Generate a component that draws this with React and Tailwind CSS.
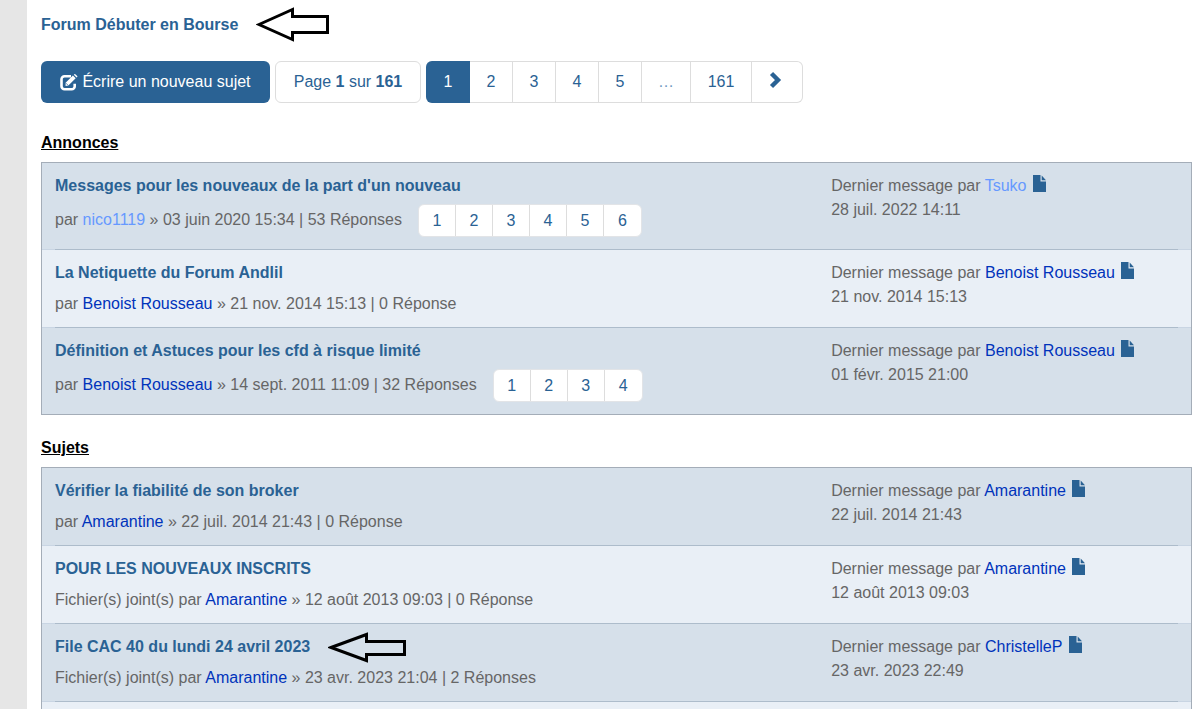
import React from "react";

const announcements = [
  {
    title: "Messages pour les nouveaux de la part d'un nouveau",
    author: "nico1119", light: true, date: "03 juin 2020 15:34", replies: "53 Réponses",
    pages: ["1", "2", "3", "4", "5", "6"],
    last: "Tsuko", lastLight: true, lastDate: "28 juil. 2022 14:11",
  },
  {
    title: "La Netiquette du Forum Andlil",
    author: "Benoist Rousseau", date: "21 nov. 2014 15:13", replies: "0 Réponse",
    last: "Benoist Rousseau", lastDate: "21 nov. 2014 15:13",
  },
  {
    title: "Définition et Astuces pour les cfd à risque limité",
    author: "Benoist Rousseau", date: "14 sept. 2011 11:09", replies: "32 Réponses",
    pages: ["1", "2", "3", "4"],
    last: "Benoist Rousseau", lastDate: "01 févr. 2015 21:00",
  },
];

const topics = [
  {
    title: "Vérifier la fiabilité de son broker",
    author: "Amarantine", date: "22 juil. 2014 21:43", replies: "0 Réponse",
    last: "Amarantine", lastDate: "22 juil. 2014 21:43",
  },
  {
    title: "POUR LES NOUVEAUX INSCRITS", attached: true,
    author: "Amarantine", date: "12 août 2013 09:03", replies: "0 Réponse",
    last: "Amarantine", lastDate: "12 août 2013 09:03",
  },
  {
    title: "File CAC 40 du lundi 24 avril 2023", attached: true, arrow: true,
    author: "Amarantine", date: "23 avr. 2023 21:04", replies: "2 Réponses",
    last: "ChristelleP", lastDate: "23 avr. 2023 22:49",
  },
];

function FileIcon() {
  return (
    <svg width="13" height="17" viewBox="0 0 13 17" className="ml-0.5 inline-block align-[-1px]" aria-hidden="true">
      <path d="M0 0h7.5v6.5H13V17H0zM8.7 0.5 13 5.3H8.7z" fill="#2a6294" />
    </svg>
  );
}

function EditIcon() {
  return (
    <svg width="18" height="17" viewBox="0 0 18 17" fill="none" aria-hidden="true">
      <path d="M11 2.2H4.5a3 3 0 0 0-3 3v7.1a3 3 0 0 0 3 3h7.2a3 3 0 0 0 3-3V9.8" stroke="white" strokeWidth="2.6" />
      <path d="M5.6 11.9V8.7l7.3-7.2 2.8 2.8-7.3 7.3zM13.8.7l.6-.5q.4-.4.9 0l1.9 1.9q.4.5 0 .9l-.6.5z" fill="white" />
      <path d="M6 9.2l2.2 2.2" stroke="#2a6294" strokeWidth=".7" />
    </svg>
  );
}

function TopArrow() {
  return (
    <svg width="74" height="36" viewBox="0 0 74 36" className="shrink-0" aria-hidden="true">
      <path d="M3 17.5 36.5 2.5v7h35v16h-35v7z" fill="white" stroke="black" strokeWidth="3" />
    </svg>
  );
}

function RowArrow() {
  return (
    <svg width="79" height="31" viewBox="0 0 79 31" className="-my-1 shrink-0" aria-hidden="true">
      <path d="M3 15.5 38.5 2.5v7h38v13h-38v6z" fill="none" stroke="black" strokeWidth="3" />
    </svg>
  );
}

function PageLinks({ pages }) {
  return (
    <span className="flex overflow-hidden rounded-md border border-[#e2e4e7] bg-white">
      {pages.map((p) => (
        <a key={p} href="#" className="flex h-[31px] w-[37px] items-center justify-center border-r border-[#ddd] text-[#2a6294] last:border-r-0">
          {p}
        </a>
      ))}
    </span>
  );
}

function Row({ topic, dark, open }) {
  return (
    <li className={dark ? "bg-[#d6e0ea]" : "bg-[#e9eff6]"}>
      <div className={`flex pr-4 pl-[13px] pt-[11px] ${topic.pages ? "pb-3" : "pb-[11px]"}`}>
        <div className="w-[69.3%] shrink-0">
          <h3 className="flex h-6 items-center gap-[18px] font-bold">
            <a href="#" className="text-[#2a6294]">{topic.title}</a>
            {topic.arrow && <RowArrow />}
          </h3>
          <div className={`flex items-center gap-4 ${topic.pages ? "mt-[6px] h-[33px]" : "mt-[7px] h-6"}`}>
            <p className={topic.pages ? "pb-0.5" : ""}>
              {topic.attached && "Fichier(s) joint(s) "}par{" "}
              <a href="#" className={topic.light ? "text-[#6699ff]" : "text-[#0033bb]"}>{topic.author}</a>
              {" » "}{topic.date} | {topic.replies}
            </p>
            {topic.pages && <PageLinks pages={topic.pages} />}
          </div>
        </div>
        <div className="min-w-0 flex-1 leading-6">
          <p className="whitespace-nowrap">
            Dernier message par{" "}
            <a href="#" className={topic.lastLight ? "text-[#6699ff]" : "text-[#0033bb]"}>{topic.last}</a>{" "}
            <a href="#" aria-label="Voir le dernier message"><FileIcon /></a>
          </p>
          <p>{topic.lastDate}</p>
        </div>
      </div>
      {open && (
        <div className="bg-[#c9d5e3] px-[13px]">
          <div className="h-px bg-[#adbccb]" />
        </div>
      )}
    </li>
  );
}

const pageClass = "flex items-center justify-center border-r border-[#ddd] text-[#2a6294]";

export default function App() {
  return (
    <div className="flex h-screen overflow-hidden bg-white font-['Liberation_Sans',Arial,sans-serif] text-[16px] leading-6 text-[#666]">
      <div className="w-[27px] shrink-0 bg-[#e6e6e6]" />
      <main className="min-w-0 flex-1 pr-[9px] pl-[14px]">
        <header className="flex h-[49px] items-center gap-[18px]">
          <h1 className="font-bold"><a href="#" className="text-[#2a6294]">Forum Débuter en Bourse</a></h1>
          <TopArrow />
        </header>

        <div className="mt-3 flex h-[42px] gap-[5px]">
          <button type="button" className="flex w-[229px] items-center justify-center gap-1 rounded-md bg-[#2a6294] text-white">
            <EditIcon />
            Écrire un nouveau sujet
          </button>
          <button type="button" className="w-[146px] rounded-md border border-[#ddd] text-[#2a6294]">
            Page <strong>1</strong> sur <strong>161</strong>
          </button>
          <nav aria-label="Pagination" className="flex rounded-md border border-l-0 border-[#ddd]">
            <span aria-current="page" className="-my-px flex w-11 items-center justify-center rounded-l-md bg-[#2a6294] text-white">1</span>
            {["2", "3", "4", "5"].map((p) => (
              <a key={p} href="#" className={`${pageClass} w-[43px]`}>{p}</a>
            ))}
            <span className="flex w-[49px] items-center justify-center border-r border-[#ddd] text-[#6f9bc2]">…</span>
            <a href="#" className={`${pageClass} w-[61px]`}>161</a>
            <a href="#" aria-label="Suivante" className="flex w-[50px] items-center justify-center pr-1 pb-1">
              <svg width="13" height="18" viewBox="0 0 13 18" fill="none" aria-hidden="true">
                <path d="M2.5 2.5 9 9l-6.5 6.5" stroke="#2a6294" strokeWidth="4.4" />
              </svg>
            </a>
          </nav>
        </div>

        <h2 className="mt-7 mb-[7px] font-bold text-black underline">Annonces</h2>
        <ul className="border border-[#a4adb8]">
          {announcements.map((t, i) => (
            <Row key={t.title} topic={t} dark={i % 2 === 0} open={i < 2} />
          ))}
        </ul>

        <h2 className="mt-[21px] mb-[7px] font-bold text-black underline">Sujets</h2>
        <ul className="border border-[#a4adb8]">
          {topics.map((t, i) => (
            <Row key={t.title} topic={t} dark={i % 2 === 0} open />
          ))}
          <li className="h-20 bg-[#e9eff6]" />
        </ul>
      </main>
    </div>
  );
}
